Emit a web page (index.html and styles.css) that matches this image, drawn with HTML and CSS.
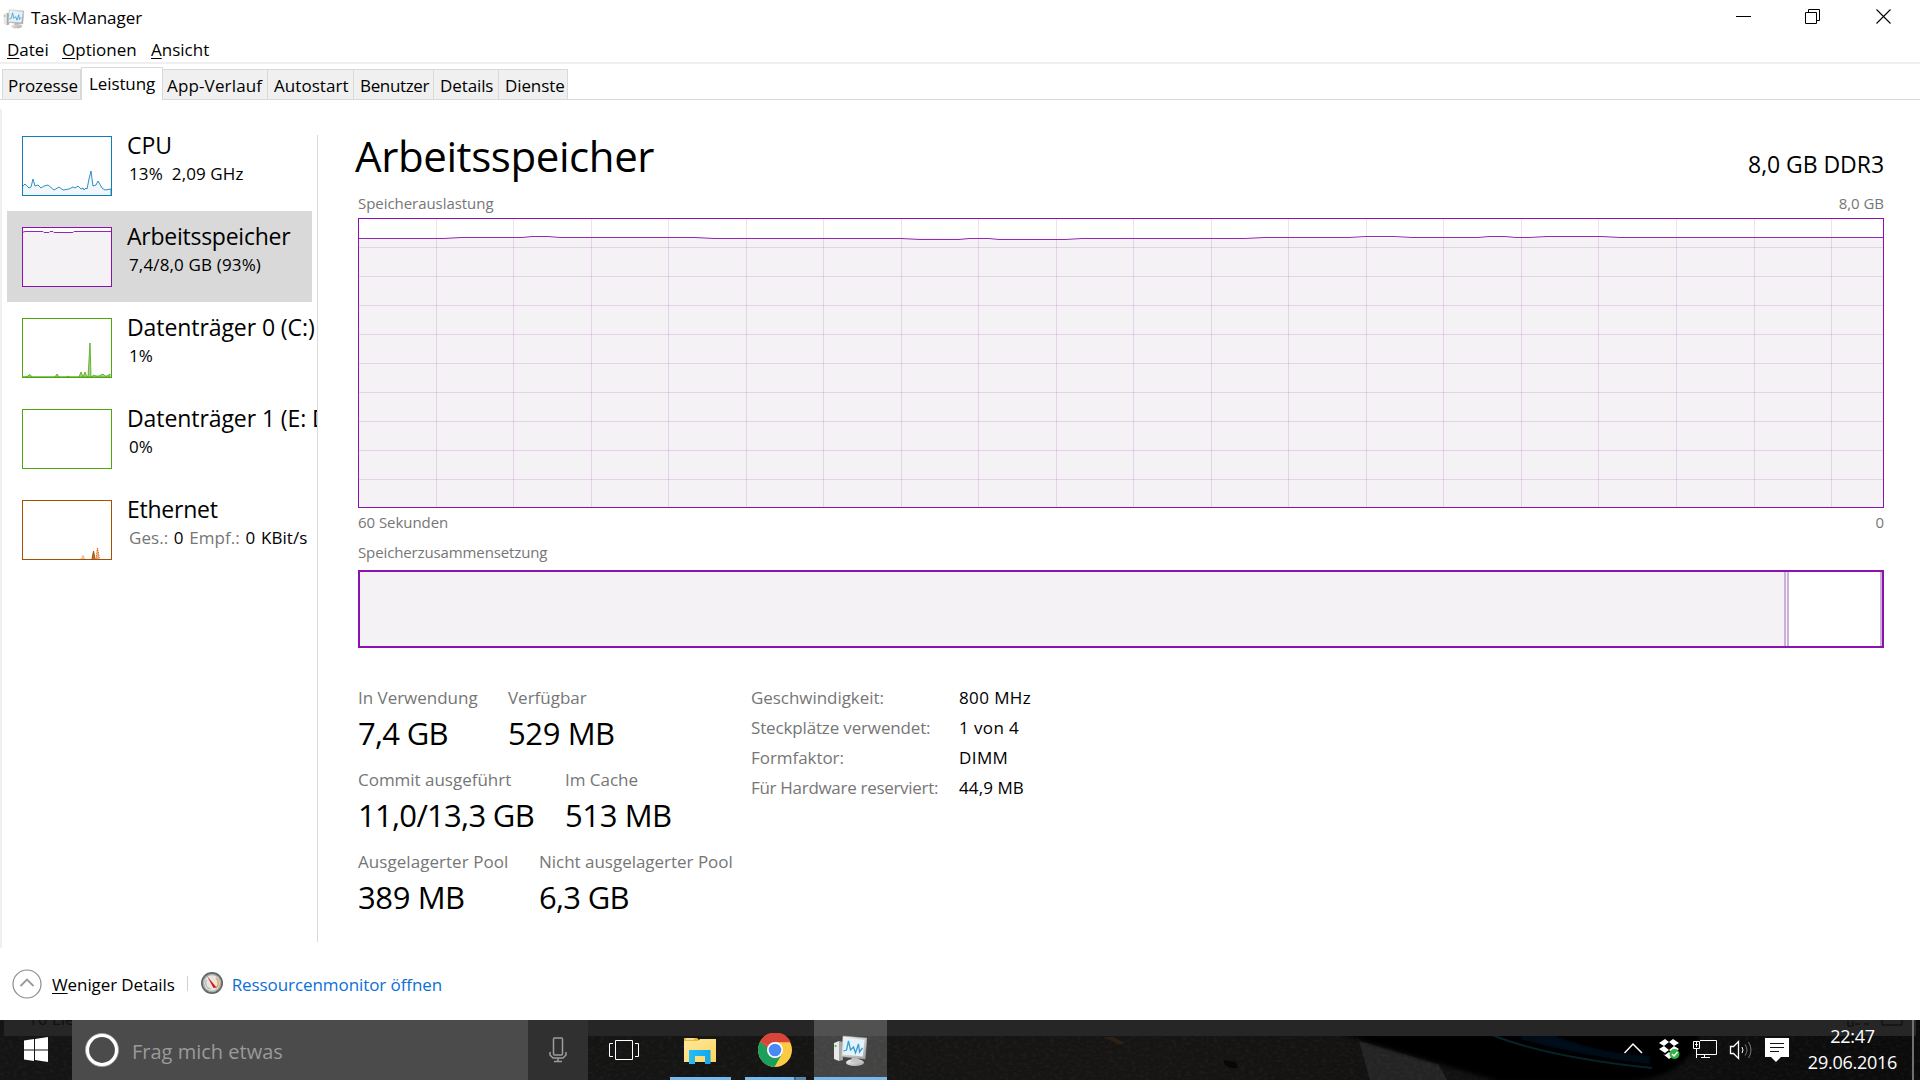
FILE: index.html
```html
<!DOCTYPE html>
<html lang="de">
<head>
<meta charset="utf-8">
<title>Task-Manager</title>
<link rel="stylesheet" href="styles.css">
</head>
<body>
<svg class="defs" width="0" height="0" aria-hidden="true">
  <defs>
    <linearGradient id="bezel" x1="0" y1="0" x2="1" y2="1"><stop offset="0" stop-color="#fafafa"/><stop offset="1" stop-color="#a2a2a2"/></linearGradient>
    <linearGradient id="folder" x1="0" y1="0" x2="1" y2="1"><stop offset="0" stop-color="#ffe9a0"/><stop offset="1" stop-color="#fbd55e"/></linearGradient>
    <linearGradient id="clip" x1="0" y1="0" x2="1" y2="0"><stop offset="0" stop-color="#27bdf8"/><stop offset="1" stop-color="#0fa8ee"/></linearGradient>
    <symbol id="taskmgr" viewBox="0 0 34 32">
      <path d="M1 8l5-2v20l-5-2z" fill="#e9e9e9"/><path d="M6 6l4 1v18l-4 1z" fill="#a9a9a9"/>
      <circle cx="2.6" cy="11" r="1.1" fill="#39c514"/>
      <ellipse cx="22" cy="27.500" rx="9" ry="3.600" fill="url(#bezel)"/><path d="M19 21h6l1 6h-8z" fill="#c5c5c5"/>
      <path d="M10 1l24 2-2 21-24-2.500z" fill="url(#bezel)" stroke="#a0a0a0" stroke-width=".6"/>
      <path d="M11.500 3l20 1.700-1.700 16.800-20-2z" fill="#e4f3fb"/>
      <path d="M10.500 16l3-1 2-9 2 9 3-3 2 6 3-9 1 8 3-4" fill="none" stroke="#3c9bcb" stroke-width="1.300"/>
    </symbol>
  </defs>
</svg>

<main class="window">
  <header class="titlebar">
    <svg class="app-icon" width="21" height="20"><use href="#taskmgr"/></svg>
    <span class="title">Task-Manager</span>
    <svg class="controls" width="156" height="16" viewBox="0 0 156 16" fill="none" stroke="#000">
      <path d="M0 7.500h15M72.500 3.500V.500h11v11h-3M69.500 3.500h11v11h-11z"/>
      <path d="M140.500.500l14 14M154.500.500l-14 14" stroke-width="1.100"/>
    </svg>
  </header>
  <nav class="menu"><span><u>D</u>atei</span><span><u>O</u>ptionen</span><span><u>A</u>nsicht</span></nav>
  <div class="tabs">
    <span class="tab t1">Prozesse</span><span class="tab active">Leistung</span><span class="tab t3">App-Verlauf</span><span class="tab t4">Autostart</span><span class="tab t5">Benutzer</span><span class="tab t6">Details</span><span class="tab t7">Dienste</span>
  </div>

  <div class="content">
    <aside class="sidebar">
      <div class="item">
        <svg class="thumb" width="90" height="60" viewBox="0 0 90 60">
          <path d="M0 51l3-3 4 4 2-1 2-8 2 7 3-1 3 3 3-2 4-1 6 5 5-3 4 3 6-1 4-2 2 1 3-2 3 3 2-1 1 2 2-2 1 1 2-10 2-8 2 15 3-1 2-4 4 7 3 2 6-1v9H0z" fill="#f1f6fa" stroke="#1a84bf" stroke-width=".9"/>
          <rect x=".5" y=".5" width="89" height="59" fill="none" stroke="#117dbb"/>
        </svg>
        <div class="info"><b>CPU</b><small class="ind">13%&nbsp; 2,09 GHz</small></div>
      </div>
      <div class="item selected">
        <svg class="thumb" width="90" height="60" viewBox="0 0 90 60">
          <path d="M0 0h90v60H0z" fill="#fff"/>
          <path d="M0 5.500l3-1h18l1 1h5l1-1h3l1 1h19l1-1h38V60H0z" fill="#f4f2f4" stroke="#9528b4"/>
          <rect x=".5" y=".5" width="89" height="59" fill="none" stroke="#8b12ae"/>
        </svg>
        <div class="info"><b class="mem">Arbeitsspeicher</b><small class="mem-sub">7,4/8,0 GB (93%)</small></div>
      </div>
      <div class="item">
        <svg class="thumb" width="90" height="60" viewBox="0 0 90 60">
          <path d="M1 59h2l2-.5 3-2 2 2.500h23l2-3 2 3h7l2-1 1 1h10l2-5 2 5 2-5 2 5h1l2-34 1 34 3-2 2 1 3 0 2-1 2-1 2 2 2 0 3-2v3z" fill="#a6d488" stroke="#4da60c" stroke-width=".8"/>
          <rect x=".5" y=".5" width="89" height="59" fill="none" stroke="#4da60c"/>
        </svg>
        <div class="info"><b>Datenträger 0 (C:)</b><small class="ind">1%</small></div>
      </div>
      <div class="item">
        <svg class="thumb" width="90" height="60" viewBox="0 0 90 60"><rect x=".5" y=".5" width="89" height="59" fill="none" stroke="#4da60c"/></svg>
        <div class="info"><b>Datenträger 1 (E: D</b><small>0%</small></div>
      </div>
      <div class="item">
        <svg class="thumb" width="90" height="60" viewBox="0 0 90 60">
          <path d="M59 59l2-4 2 4" fill="#f3c9ac" stroke="#e08c5a" stroke-width=".7" stroke-dasharray="1 1"/>
          <path d="M70 59l1.500-8 1.500 8" fill="#c1703a" stroke="#a74f01"/>
          <path d="M74 59l1.500-11 2 11" fill="#eeb48e" stroke="#d0662a" stroke-dasharray="1.500 1"/>
          <rect x=".5" y=".5" width="89" height="59" fill="none" stroke="#a74f01"/>
        </svg>
        <div class="info"><b class="eth">Ethernet</b><small class="net"><i>Ges.:</i> 0 <i>Empf.:</i> 0 KBit/s</small></div>
      </div>
    </aside>

    <section class="panel">
      <div class="heading"><h1>Arbeitsspeicher</h1><span class="capacity">8,0 GB DDR3</span></div>
      <div class="axis top"><span>Speicherauslastung</span><span>8,0 GB</span></div>
      <svg class="chart" width="1526" height="290" viewBox="0 0 1526 290">
        <path fill="#f4f2f4" d="M0 20h86l18-1h237l19 1h195l160 1 166-1h190v-1h455V290H0z"/>
        <path fill="none" stroke="#8b12ae" stroke-opacity=".14" d="M78.500 0v290M155.500 0v290M233.500 0v290M310.500 0v290M388.500 0v290M465.500 0v290M543.500 0v290M620.500 0v290M698.500 0v290M775.500 0v290M853.500 0v290M930.500 0v290M1008.500 0v290M1085.500 0v290M1163.500 0v290M1240.500 0v290M1318.500 0v290M1396.500 0v290M1473.500 0v290M0 29.500h1526M0 58.500h1526M0 87.500h1526M0 116.500h1526M0 145.500h1526M0 174.500h1526M0 203.500h1526M0 232.500h1526M0 261.500h1526"/>
        <path fill="none" stroke="#9528b4" d="M0 20.500h86l17-1h61l10-1h16l12 1h135l19 1h187l19 1h39l10-1h20l10 1h66l17-1h163l19-1h85l17-1h28l18 1h66l11-1h16l11 1h13l18-1h55l18 1h265"/>
        <rect x=".5" y=".5" width="1525" height="289" fill="none" stroke="#8b12ae"/>
      </svg>
      <div class="axis bottom"><span>60 Sekunden</span><span>0</span></div>
      <div class="axis comp">Speicherzusammensetzung</div>
      <div class="composition"><span class="used"></span><span class="modified"></span><span class="standby"></span></div>

      <div class="stats">
        <div class="figures">
          <div class="row"><dl class="f1"><dt>In Verwendung</dt><dd class="n">7,4 GB</dd></dl><dl><dt>Verfügbar</dt><dd>529 MB</dd></dl></div>
          <div class="row"><dl class="f2"><dt>Commit ausgeführt</dt><dd class="n">11,0/13,3 GB</dd></dl><dl><dt>Im Cache</dt><dd>513 MB</dd></dl></div>
          <div class="row"><dl class="f3"><dt class="pool">Ausgelagerter Pool</dt><dd>389 MB</dd></dl><dl><dt>Nicht ausgelagerter Pool</dt><dd class="n">6,3 GB</dd></dl></div>
        </div>
        <div class="hardware">
          <span>Geschwindigkeit:</span><em class="mhz">800 MHz</em>
          <span class="st">Steckplätze verwendet:</span><em class="mhz">1 von 4</em>
          <span>Formfaktor:</span><em class="mhz">DIMM</em>
          <span class="hw">Für Hardware reserviert:</span><em>44,9 MB</em>
        </div>
      </div>
    </section>
  </div>

  <footer class="footer">
    <svg width="30" height="30" viewBox="0 0 30 30" fill="none"><circle cx="15" cy="15" r="14" stroke="#8c8c8c" stroke-width="1.200"/><path d="M8.500 17l6.500-6.500 6.500 6.500" stroke="#999" stroke-width="1.800"/></svg>
    <span class="less"><u>W</u>eniger Details</span>
    <span class="sep"></span>
    <svg class="gauge" width="22" height="22" viewBox="0 0 22 22"><circle cx="11" cy="11" r="11" fill="#5f6767"/><circle cx="11" cy="11" r="9.300" fill="#a9b0b0"/><circle cx="11" cy="11" r="7.800" fill="#e9e5df"/><path d="M15 6a6.500 6.500 0 0 1 0 10" fill="none" stroke="#ef9c55" stroke-width="1.500"/><path d="M5.500 8a6 6 0 0 0 4 9" fill="none" stroke="#aaa"/><path d="M6 4l9.500 11.500-3 .5z" fill="#d5171c"/></svg>
    <a class="resmon">Ressourcenmonitor öffnen</a>
  </footer>
</main>

<div class="taskbar">
  <svg class="wallpaper" width="1920" height="60" viewBox="0 0 1920 60">
    <defs>
      <filter id="grain" x="0" y="0" width="100%" height="100%"><feTurbulence type="fractalNoise" baseFrequency=".22 .35" numOctaves="3" seed="4"/><feColorMatrix values="0 0 0 0 .5  0 0 0 0 .5  0 0 0 0 .5  .9 0 0 0 -.4"/></filter>
      <filter id="soft"><feGaussianBlur stdDeviation="2"/></filter>
      <linearGradient id="road"><stop offset="0" stop-color="#141414"/><stop offset=".6" stop-color="#161514"/><stop offset="1" stop-color="#0c0b0b"/></linearGradient>
    </defs>
    <path fill="url(#road)" d="M0 0h1920v60H0z"/>
    <path fill="#232423" d="M1357 14l13 46h77l-9-16-81-24z"/>
    <path filter="url(#grain)" opacity=".15" d="M0 0h1920v60H0z"/>
    <path fill="#000" filter="url(#soft)" d="M1340 14l100 30 60 18h130c40-4 65-22 70-48z"/>
    <path d="M1510 16q60 18 140 28v-8q-50-2-95-20z" fill="#04111a" filter="url(#soft)"/>
    <path d="M1492 15q55 22 160 33" fill="none" stroke="#06232a" stroke-width="2"/>
    <path d="M1104 17l16 8 5-2-12-6z" fill="#2b2115"/><path d="M1224 40l12 2 2 6-8 0-6-4z" fill="#070707"/>
    <path fill="#262626" d="M4 0h1912v16H4z"/>
    <path d="M1848 1v5h5v-5M1855 4h5m4 0h5M1882 0v5h20v-5" fill="none" stroke="#090909"/>
  </svg>
  <div class="behind">10 Lie</div>
  <div class="bar">
    <svg class="start" width="72" height="60" viewBox="0 0 72 60"><path fill="#fff" d="M24 20.500l10-1.500v10.400H24zM35 18.900l13-1.900v12.400H35zM24 30.500h10V41l-10-1.500zM35 30.500h13V42l-13-1.900z"/></svg>
    <div class="search">
      <svg width="36" height="36" viewBox="0 0 36 36"><circle cx="18" cy="18" r="14.700" fill="none" stroke="#fff" stroke-width="3.600"/><circle cx="18" cy="18" r="16.500" fill="none" stroke="#a5a5a5" stroke-width=".8"/></svg>
      <span>Frag mich etwas</span>
    </div>
    <div class="mic"><svg width="18" height="26" viewBox="0 0 18 26" fill="none" stroke="#9c9c9c" stroke-width="1.500"><rect x="4.500" y="1" width="9" height="17" rx="1"/><path d="M1 15v3l3 3h10l3-3v-3M9 21v3.500M5 24.500h8"/></svg></div>
    <div class="app view"><svg width="30" height="20" viewBox="0 0 30 20" fill="none" stroke="#fff"><path d="M6.500.500h17v19h-17zM4 3.500H.5v13H4M26 3.500h3.500v13H26"/></svg></div>
    <div class="app explorer"><svg width="32" height="27" viewBox="0 0 32 27"><path d="M0 1h13l2 2h17v22H0z" fill="#f0b92b"/><path d="M0 4h14l2-2h16v23H0z" fill="url(#folder)"/><path d="M2 2h8" stroke="#fff"/><path d="M5 13h21.500v14h-5.500v-8h-10v8H5z" fill="url(#clip)"/></svg></div>
    <div class="app chrome"><svg width="34" height="34" viewBox="0 0 34 34"><circle cx="17" cy="17" r="17" fill="#fbcb43"/><path d="M17 17L2.300 8.500A17 17 0 0 1 32.700 9.200H17z" fill="#d9453a"/><path d="M2.300 8.500A17 17 0 0 0 16.500 34l7.600-13.200-14-.5z" fill="#1a9f5c"/><path d="M17 17L2.300 8.500l8 13zM17 9.200L2.300 8.500A17 17 0 0 1 17 0z" fill="#d9453a"/><path d="M2.300 8.500l7.800 12.500 5-2z" fill="#1a9f5c"/><circle cx="17" cy="17" r="8" fill="#fff"/><circle cx="17" cy="17" r="6.300" fill="#4a89f4"/></svg></div>
    <div class="app manager"><svg width="34" height="32"><use href="#taskmgr"/></svg></div>
    <div class="tray">
      <svg width="167" height="26" viewBox="0 0 167 26" fill="none" stroke="#fff">
        <path d="M.5 16L9 7l9 9" stroke-width="1.500"/>
        <path fill="#fff" stroke="none" d="M41 2l4 3-5 4-5-3zM49 2l6 4-5 3-5-4zM35 12l5-3 5 4-4 3zM55 12l-5-3-5 4 4 3zM39 17l2 1 4-3 4 3 2-1-6 5z"/>
        <circle cx="50.500" cy="17" r="5" fill="#2fb341" stroke="none"/><path d="M48 17l2 2 3.500-4" stroke-width="1.500"/>
        <path d="M76 3.500h16.500v14H72M72.500 12v9M80.500 17.500v3M77 20.500h9M69.500 4.500h6v7h-6zM71 7.500h3M72.500 5v5"/>
        <path d="M106.500 9.500h3l5-5v17l-5-5h-3z" stroke-width="1.300"/><path d="M118 10q2 3 0 6"/><path d="M121 7.500q4 5.500 0 11M124.500 5q5 8 0 16" stroke="#777"/>
        <path fill="#fff" stroke="none" d="M141 1h24v19h-8l-5 5-5-5h-6z"/><path stroke="#111" d="M146 6.500h14M146 10.500h14M146 14.500h9"/>
      </svg>
      <div class="clock"><span>22:47</span><span>29.06.2016</span></div>
      <span class="desktop"></span>
    </div>
  </div>
</div>
</body>
</html>
```
FILE: styles.css
```css
* { box-sizing: border-box; }
body {
  margin: 0;
  width: 1920px;
  height: 1080px;
  overflow: hidden;
  background: #fff;
  color: #000;
  font: 17px/24px "Open Sans", "Noto Sans", sans-serif;
  white-space: nowrap;
}
svg { display: block; flex: none; }
.defs { position: absolute; }
u { text-decoration-thickness: 1px; text-underline-offset: 2px; }

.window { display: flex; flex-direction: column; height: 1020px; }
.titlebar { display: flex; height: 36px; padding: 6px 28px 0 3px; }
.app-icon { margin-top: 3px; }
.title { margin-left: 7px; letter-spacing: -.05px; }
.controls { margin: 3px 0 0 auto; }

.menu { display: flex; height: 28px; padding: 2px 0 0 7px; border-bottom: 2px solid #f0f0f0; }
.menu span:nth-child(1) { width: 55px; }
.menu span:nth-child(2) { width: 89px; }

.tabs { display: flex; align-items: flex-end; height: 36px; padding-left: 2px; border-bottom: 1px solid #d9d9d9; }
.tab { height: 30px; padding: 4px 0 0 5px; border: 1px solid #d9d9d9; border-width: 1px 1px 0 0; background: #f0f0f0; letter-spacing: -.1px; }
.t1 { width: 79px; border-left-width: 1px; }
.tab.active { width: 82px; height: 33px; margin-bottom: -1px; padding: 4px 0 0 7px; border-left-width: 1px; background: #fff; letter-spacing: -.1px; }
.tab.t3 { width: 105px; padding-left: 4px; letter-spacing: .15px; }
.tab.t4 { width: 86px; padding-left: 6px; letter-spacing: .05px; }
.tab.t5 { width: 80px; padding-left: 6px; letter-spacing: -.35px; }
.t6 { width: 65px; padding-left: 6px; }
.t7 { width: 69px; padding-left: 6px; }

.content { display: flex; height: 848px; }
.sidebar { position: relative; width: 318px; height: 848px; padding-top: 20px; overflow: hidden; }
.sidebar::before { content: ""; position: absolute; left: 0; top: 9px; width: 2px; height: 839px; background: #f0f0f0; }
.sidebar::after { content: ""; position: absolute; right: 0; top: 35px; width: 1px; bottom: 6px; background: #d9d9d9; }
.item { display: flex; width: 305px; height: 91px; margin-left: 7px; padding: 16px 0 0 15px; }
.selected { background: #d9d9d9; }
.info { display: flex; flex-direction: column; margin: -6px 0 0 15px; }
.info b { font-size: 23px; font-weight: 400; line-height: 30px; letter-spacing: -.08px; }
.info b.mem, .info b.eth { letter-spacing: -.25px; }
.info small { margin: 2px 0 0 2px; font-size: 17px; letter-spacing: .08px; }
.info small.ind { letter-spacing: .1px; }
.info small.mem-sub { letter-spacing: .15px; }
.info small.net { letter-spacing: .05px; word-spacing: 1.2px; }
.info i { font-style: normal; color: #767676; }

.panel { width: 1526px; margin-left: 40px; padding-top: 26px; }
.heading { display: flex; justify-content: space-between; height: 67px; }
h1 { margin: 0 0 0 -3px; font-size: 42px; font-weight: 400; line-height: 60px; letter-spacing: -.4px; }
.capacity { padding-top: 8px; font-size: 23px; line-height: 60px; letter-spacing: -.05px; }
.axis { display: flex; justify-content: space-between; height: 20px; font-size: 15px; line-height: 20px; letter-spacing: -.05px; color: #767676; }
.top { height: 25px; }
.bottom { margin-top: 4px; }
.comp { margin: 10px 0 8px; letter-spacing: -.12px; }
.composition { display: flex; height: 78px; border: 2px solid #8b12ae; }
.composition span { flex: none; border-right: 2px solid #cdb0da; }
.used { width: 1426px; background: #f4f2f4; }
.modified { width: 3px; background: #f4f2f4; }
.composition .standby { width: 93px; }

.stats { display: flex; padding-top: 38px; }
.figures { width: 393px; }
.row { display: flex; height: 82px; }
dl, dd { margin: 0; }
dt { color: #767676; letter-spacing: -.02px; }
.pool { letter-spacing: .05px; }
dd { padding-top: 3px; font-size: 31px; line-height: 40px; letter-spacing: -.4px; }
dd.n { letter-spacing: -.7px; }
.f1 { width: 150px; }
.f2 { width: 207px; }
.f3 { width: 181px; }
.hardware { display: grid; grid-template-columns: 208px auto; grid-auto-rows: 30px; align-content: start; margin-top: -3px; line-height: 30px; letter-spacing: -.05px; color: #767676; }
.hardware em { font-style: normal; color: #000; letter-spacing: .1px; }
.st { letter-spacing: -.15px; }
.hw { letter-spacing: -.3px; }
.hardware .mhz { letter-spacing: .4px; }

.footer { display: flex; align-items: center; height: 72px; padding: 0 0 1px 12px; }
.less { margin: 2px 0 0 10px; letter-spacing: -.1px; }
.sep { width: 1px; height: 15px; margin: 0 13px 0 12px; background: #d0d0d0; }
.gauge { margin-top: -2px; }
.resmon { margin: 2px 0 0 9px; color: #0b6fd6; letter-spacing: -.08px; }

.taskbar { position: relative; height: 60px; overflow: hidden; background: #111; }
.wallpaper, .bar, .behind { position: absolute; left: 0; top: 0; }
.behind { left: 28px; top: -13px; color: #101010; }
.bar { display: flex; width: 1920px; height: 60px; }
.search { display: flex; align-items: center; width: 456px; padding-left: 12px; background: #4b4b4b; color: #9a9a9a; font-size: 20px; }
.search span { margin: 3px 0 0 12px; }
.mic { display: grid; place-items: center; width: 60px; padding-right: 1px; background: #303030; }
.app { display: grid; place-items: center; height: 60px; }
.view { width: 72px; }
.explorer, .chrome { width: 61px; border-bottom: 3px solid #76b9ed; }
.explorer { margin-left: 10px; padding: 3px 1px 0 0; }
.chrome { margin: 0 8px 0 14px; padding: 3px 2px 0 0; border-image: linear-gradient(90deg, #76b9ed 47px, #416887 47px 49px, #5788ae 49px) 3; border-width: 0 0 3px; }
.manager { width: 73px; padding: 4px 2px 0 0; border-bottom: 3px solid #76b9ed; background: rgba(255, 255, 255, .2); }
.tray { display: flex; margin-left: auto; padding-right: 6px; color: #fff; }
.tray > svg { margin: 17px 0 0; }
.clock { display: flex; flex-direction: column; align-items: center; width: 109px; margin: 3px 0 0 7px; font-size: 18px; line-height: 26px; letter-spacing: -.25px; }
.desktop { width: 2px; margin-left: 5px; background: #6f6f6f; }
```
